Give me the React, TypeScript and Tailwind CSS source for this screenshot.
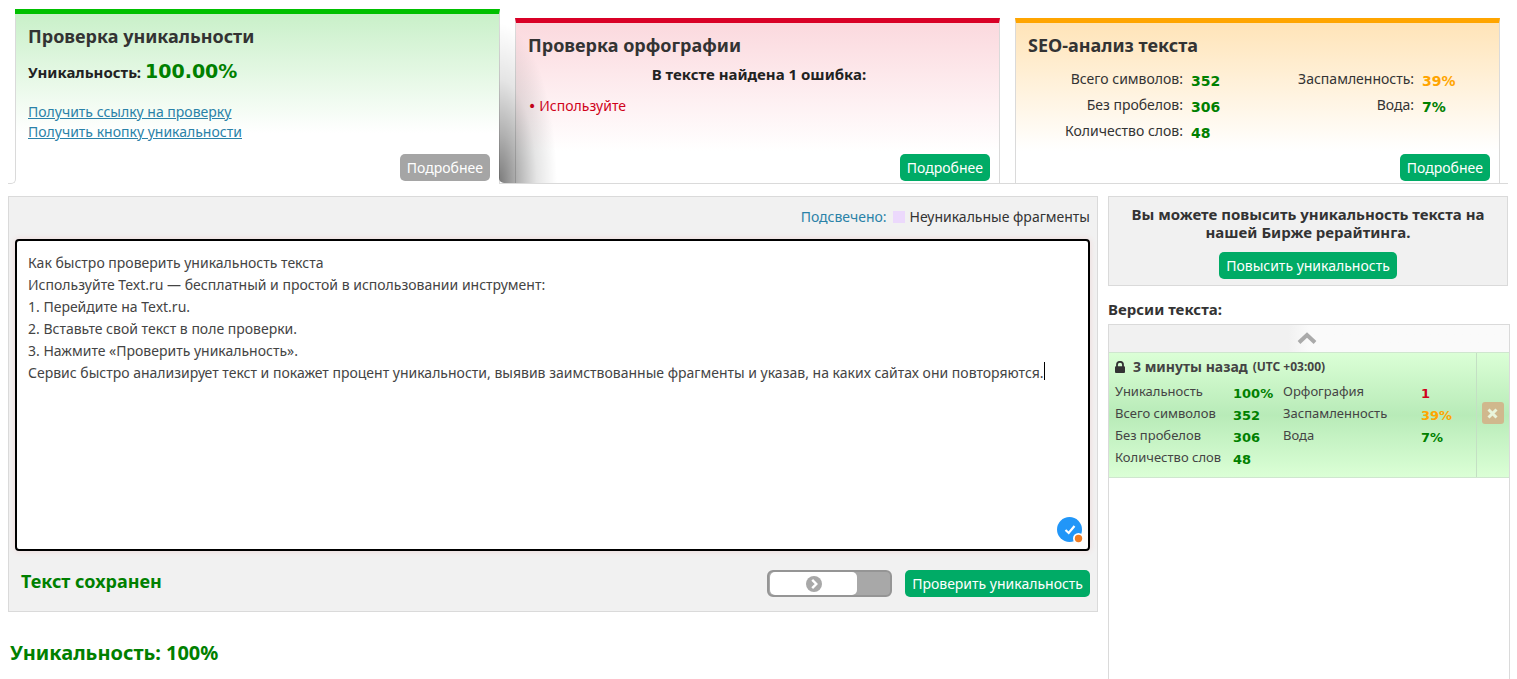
import { useState } from 'react';
import type { ReactNode } from 'react';

type Stat = { label: string; value: string; color: string };

const GREEN = 'text-[#008000]';
const ORANGE = 'text-[#ffa500]';
const RED = 'text-[#d0021b]';

const counts: Stat[] = [
  { label: 'Всего символов', value: '352', color: GREEN },
  { label: 'Без пробелов', value: '306', color: GREEN },
  { label: 'Количество слов', value: '48', color: GREEN },
];

const quality: Stat[] = [
  { label: 'Заспамленность', value: '39%', color: ORANGE },
  { label: 'Вода', value: '7%', color: GREEN },
];

const initialText = `Как быстро проверить уникальность текста
Используйте Text.ru — бесплатный и простой в использовании инструмент:
1. Перейдите на Text.ru.
2. Вставьте свой текст в поле проверки.
3. Нажмите «Проверить уникальность».
Сервис быстро анализирует текст и покажет процент уникальности, выявив заимствованные фрагменты и указав, на каких сайтах они повторяются.`;

const Button = ({ children, muted }: { children: ReactNode; muted?: boolean }) => (
  <button
    type="button"
    className={`h-[27px] rounded-[5px] px-[7px] text-[14px] leading-[27px] whitespace-nowrap text-white ${muted ? 'bg-[#a5a5a5]' : 'bg-[#00ab66]'}`}
  >
    {children}
  </button>
);

const CardStats = ({ items }: { items: Stat[] }) => (
  <dl className="grid grid-cols-[155px_1fr] content-start gap-x-[8px]">
    {items.map((item) => (
      <div key={item.label} className="contents">
        <dt className="h-[26px] text-right text-[14px] leading-[20px] whitespace-nowrap">{item.label}:</dt>
        <dd className={`h-[26px] pt-[2px] font-['DejaVu_Sans',sans-serif] text-[14px] leading-[20px] font-bold ${item.color}`}>
          {item.value}
        </dd>
      </div>
    ))}
  </dl>
);

const VersionStats = ({ items, wide }: { items: Stat[]; wide?: boolean }) => (
  <dl className={`grid content-start ${wide ? 'grid-cols-[138px_1fr]' : 'grid-cols-[118px_1fr]'}`}>
    {items.map((item) => (
      <div key={item.label} className="contents">
        <dt className="h-[22px] text-[13px] leading-[18px] whitespace-nowrap text-[#444]">{item.label}</dt>
        <dd className={`h-[22px] pt-[2px] font-['DejaVu_Sans',sans-serif] text-[13px] leading-[20px] font-bold ${item.color}`}>
          {item.value}
        </dd>
      </div>
    ))}
  </dl>
);

const Tabs = () => (
  <section className="grid grid-cols-[7px_1fr_15px_1fr_15px_1fr_8px] items-end">
    <div className="-mr-px h-[166px] rounded-br-[5px] border-r border-b border-[#dadada]" />

    <article className="-z-10 flex h-[175px] flex-col border-t-5 border-r border-t-[#00c000] border-r-[#dadada] bg-linear-to-b from-[#c9f0c9] to-white to-70% pt-[11px] pr-[9px] pb-[3px] pl-[13px]">
      <h2 className="text-[18px] leading-[22px] font-bold">Проверка уникальности</h2>
      <p className="mt-[10px] text-[15px] leading-[28px] font-bold text-[#222]">
        Уникальность: <span className="font-['DejaVu_Sans',sans-serif] text-[19px] text-[#008000]">100.00%</span>
      </p>
      <div className="mt-[16px] flex flex-col items-start text-[14px] leading-[20px] text-[#2a82a8] underline">
        <a href="#link">Получить ссылку на проверку</a>
        <a href="#button">Получить кнопку уникальности</a>
      </div>
      <div className="mt-auto flex justify-end">
        <Button muted>Подробнее</Button>
      </div>
    </article>

    {/* the open tab casts a shadow over its neighbour */}
    <div className="relative h-[166px] border-b border-[#dadada]">
      <div className="pointer-events-none absolute bottom-0 -left-px z-10 h-[165px] w-[60px] rounded-bl-[5px] bg-[radial-gradient(ellipse_58px_160px_at_0%_100%,rgba(0,0,0,0.52),rgba(0,0,0,0.3)_32%,rgba(0,0,0,0.1)_65%,transparent)]" />
    </div>

    <article className="flex h-[166px] flex-col border-x border-t-5 border-b border-[#dadada] border-t-[#d90026] bg-linear-to-b from-[#fbd9de] to-white to-80% pt-[11px] pr-[9px] pb-[2px] pl-[12px]">
      <h2 className="text-[18px] leading-[22px] font-bold">Проверка орфографии</h2>
      <p className="mt-[8px] text-center text-[15px] leading-[20px] font-bold text-[#222]">В тексте найдена 1 ошибка:</p>
      <ul className="mt-[12px] text-[14px] leading-[20px] text-[#d0021b]">
        <li className="flex gap-[3px]">
          <span className="font-['DejaVu_Sans',sans-serif]">•</span>
          Используйте
        </li>
      </ul>
      <div className="mt-auto flex justify-end">
        <Button>Подробнее</Button>
      </div>
    </article>

    <div className="h-[166px] border-b border-[#dadada]" />

    <article className="flex h-[166px] flex-col border-x border-t-5 border-b border-[#dadada] border-t-[#ffa500] bg-linear-to-b from-[#ffe4b8] to-white to-80% pt-[11px] pr-[9px] pb-[2px] pl-[12px]">
      <h2 className="text-[18px] leading-[22px] font-bold">SEO-анализ текста</h2>
      <div className="mt-[13px] grid grid-cols-2">
        <CardStats items={counts} />
        <CardStats items={quality} />
      </div>
      <div className="mt-auto flex justify-end">
        <Button>Подробнее</Button>
      </div>
    </article>

    <div className="h-[166px] border-b border-[#dadada]" />
  </section>
);

const Editor = () => {
  const [text, setText] = useState(initialText);

  return (
    <section className="border border-[#dadada] bg-[#f1f1f1] pt-[10px] pr-[7px] pb-[14px] pl-[6px]">
      <div className="flex items-center justify-end text-[14px] leading-[20px]">
        <span className="text-[#2a82a8]">Подсвечено:</span>
        <span className="mr-[5px] ml-[6px] size-[12px] bg-[#ecd9fc]" />
        <span>Неуникальные фрагменты</span>
      </div>

      <div className="relative mt-[12px]">
        <textarea
          aria-label="Текст для проверки"
          spellCheck={false}
          value={text}
          onChange={(e) => setText(e.target.value)}
          className="block h-[312px] w-full resize-none rounded-[4px] border-2 border-black bg-white px-[11px] py-[11px] text-[14px] leading-[22px] text-[#444] shadow-[0_0_6px_#f0d8d8] outline-none"
        />
        {/* caret at the end of the saved text */}
        {text === initialText && <span className="absolute top-[123px] left-[1029px] h-[18px] w-px bg-black" />}
        <svg className="absolute right-[7px] bottom-[8px] size-[26px]" viewBox="0 0 26 26" aria-hidden="true">
          <circle cx="12.5" cy="12.5" r="12.5" fill="#2196f8" />
          <path d="M8.5 13l3.2 3 5.8-7" fill="none" stroke="#fff" strokeWidth="2.2" />
          <circle cx="21.5" cy="21.5" r="5.5" fill="#fff" />
          <circle cx="21.5" cy="21.5" r="3.7" fill="#f07c22" />
        </svg>
      </div>

      <div className="mt-[19px] flex items-start">
        <strong className="ml-[6px] flex-1 text-[18px] leading-[22px] text-[#008000]">Текст сохранен</strong>
        <button
          type="button"
          aria-label="Сдвинуть"
          className="mr-[13px] flex h-[27px] w-[125px] rounded-[6px] border-2 border-[#959595] bg-[#a8a8a8] pl-px"
        >
          <span className="flex h-[23px] w-[87px] items-center justify-center rounded-[5px] bg-white">
            <svg className="size-[16px]" viewBox="0 0 16 16" aria-hidden="true">
              <circle cx="8" cy="8" r="8" fill="#a8a8a8" />
              <path d="M6.2 3.8L10.3 8l-4.1 4.2" fill="none" stroke="#fff" strokeWidth="2.4" />
            </svg>
          </span>
        </button>
        <Button>Проверить уникальность</Button>
      </div>
    </section>
  );
};

const Sidebar = () => (
  <aside className="flex w-[400px] shrink-0 flex-col">
    <div className="flex flex-col items-center border border-[#dadada] bg-[#f1f1f1] px-[10px] pt-[8px] pb-[6px] text-center">
      <p className="text-[15px] leading-[18px] font-bold">Вы можете повысить уникальность текста на нашей Бирже рерайтинга.</p>
      <div className="mt-[11px]">
        <Button>Повысить уникальность</Button>
      </div>
    </div>

    <h3 className="mt-[13px] text-[15px] leading-[20px] font-bold">Версии текста:</h3>

    <div className="mt-[5px] -mr-[2px] flex-1 border-x border-t border-[#dadada]">
      <button
        type="button"
        aria-label="Выше"
        className="flex h-[27px] w-full items-center justify-center bg-linear-to-r from-[#f1f1f1] from-45% to-[#fafafa] to-50% pr-[4px] pb-[2px]"
      >
        <svg className="h-[12px] w-[20px]" viewBox="0 0 20 12" aria-hidden="true">
          <path d="M2 10.5L10 3l8 7.5" fill="none" stroke="#aaa" strokeWidth="4" />
        </svg>
      </button>
      <div className="flex border-y border-[#cfe6cf] bg-linear-to-b from-[#dbffd6] via-[#b8ebb8] to-[#dbffd6]">
        <div className="flex-1 pt-[4px] pb-[7px] pl-[6px]">
          <h4 className="flex items-center text-[14px] leading-[20px] font-bold text-[#444]">
            <svg className="mr-[8px] h-[12px] w-[10px]" viewBox="0 0 10 12" aria-hidden="true">
              <path d="M2 6V3.8a3 3 0 016 0V6" fill="none" stroke="#333" strokeWidth="1.8" />
              <rect y="5.3" width="10" height="6.7" rx="1" fill="#333" />
            </svg>
            3 минуты назад <span className="ml-[5px] text-[12px]">(UTC +03:00)</span>
          </h4>
          <div className="mt-[5px] grid grid-cols-[168px_1fr]">
            <VersionStats items={[{ label: 'Уникальность', value: '100%', color: GREEN }, ...counts]} />
            <VersionStats wide items={[{ label: 'Орфография', value: '1', color: RED }, ...quality]} />
          </div>
        </div>
        <div className="flex w-[33px] items-center justify-center border-l border-[#c4dfc4] pr-px pb-[4px]">
          <button type="button" aria-label="Удалить" className="flex size-[22px] items-center justify-center rounded-[3px] bg-[#d0b88d]">
            <svg className="size-[11px]" viewBox="0 0 11 11" aria-hidden="true">
              <path d="M1.5 1.5l8 8M9.5 1.5l-8 8" stroke="#e9f5dc" strokeWidth="3" />
            </svg>
          </button>
        </div>
      </div>
    </div>
  </aside>
);

export default function App() {
  return (
    <main className="isolate flex min-h-screen flex-col bg-white pt-[9px] pr-[9px] pl-[8px] font-['Noto_Sans',sans-serif] text-[#333]">
      <Tabs />
      <div className="mt-[12px] flex flex-1 gap-[10px]">
        <div className="min-w-0 flex-1">
          <Editor />
          <p className="mt-[30px] ml-[2px] text-[20px] leading-[22px] font-bold text-[#008000]">Уникальность: 100%</p>
        </div>
        <Sidebar />
      </div>
    </main>
  );
}
